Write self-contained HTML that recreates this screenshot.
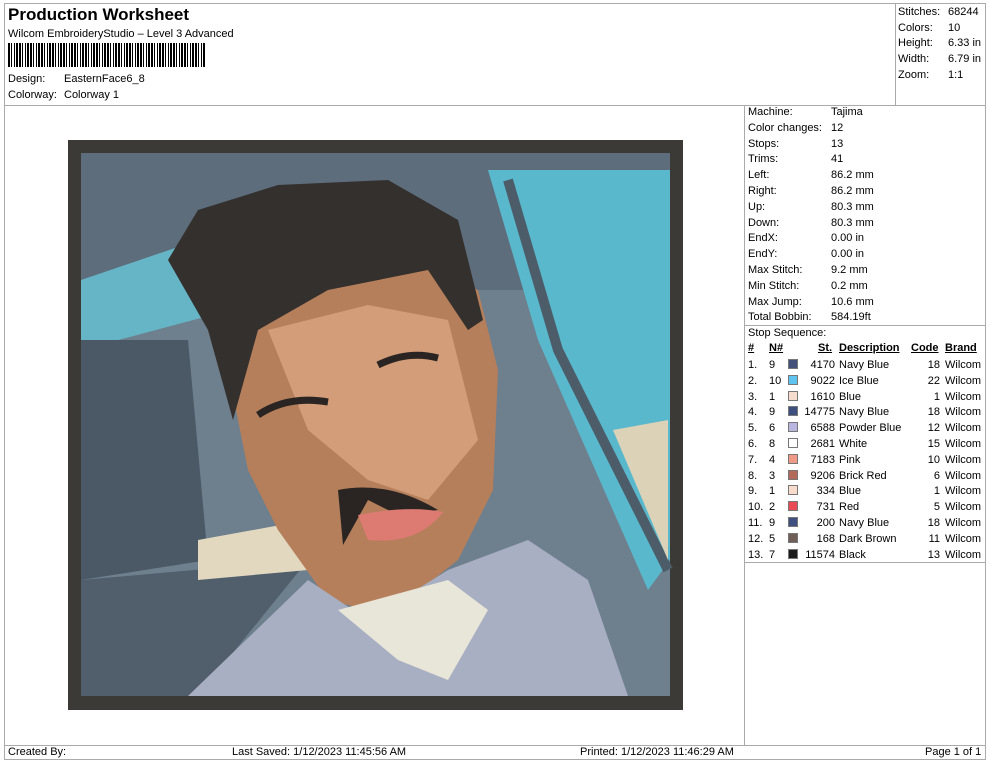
<!DOCTYPE html>
<html><head><style>
*{margin:0;padding:0;box-sizing:border-box}
body{width:990px;height:762px;background:#fff;font-family:"Liberation Sans",Arial,sans-serif;font-size:11px;color:#000;position:relative;overflow:hidden}
.a{position:absolute;white-space:nowrap}
.b{position:absolute;border:1px solid #aaa}
.sw{position:absolute;width:10px;height:10px;border:1px solid #777}
</style></head><body>
<div class="b" style="left:4px;top:3px;width:982px;height:757px"></div>
<div class="b" style="left:4px;top:3px;width:892px;height:103px"></div>
<div class="b" style="left:4px;top:105px;width:741px;height:641px"></div>
<div class="b" style="left:744px;top:105px;width:242px;height:458px"></div>
<div class="b" style="left:744px;top:325px;width:242px;height:1px;border-width:1px 0 0 0"></div>
<div class="b" style="left:4px;top:745px;width:982px;height:15px"></div>
<div class="a" style="left:8px;top:5px;font-size:17px;font-weight:bold">Production Worksheet</div>
<div class="a" style="left:8px;top:28px">Wilcom EmbroideryStudio – Level 3 Advanced</div>
<div class="a" style="left:8px;top:43px;width:198px;height:24px;background:repeating-linear-gradient(90deg,#000 0 2px,#fff 2px 3px,#000 3px 4px,#fff 4px 6px,#000 6px 7px,#fff 7px 8px,#000 8px 10px,#fff 10px 11px)"></div>
<div class="a" style="left:8px;top:73px">Design:</div><div class="a" style="left:64px;top:73px">EasternFace6_8</div>
<div class="a" style="left:8px;top:89px">Colorway:</div><div class="a" style="left:64px;top:89px">Colorway 1</div>
<div class="a" style="left:898px;top:5px;line-height:15.7px">Stitches:<br>Colors:<br>Height:<br>Width:<br>Zoom:</div>
<div class="a" style="left:948px;top:5px;line-height:15.7px">68244<br>10<br>6.33 in<br>6.79 in<br>1:1</div>
<div class="a" style="left:748px;top:105px;line-height:15.8px">Machine:<br>Color changes:<br>Stops:<br>Trims:<br>Left:<br>Right:<br>Up:<br>Down:<br>EndX:<br>EndY:<br>Max Stitch:<br>Min Stitch:<br>Max Jump:<br>Total Bobbin:<br>Stop Sequence:</div>
<div class="a" style="left:831px;top:105px;line-height:15.8px">Tajima<br>12<br>13<br>41<br>86.2 mm<br>86.2 mm<br>80.3 mm<br>80.3 mm<br>0.00 in<br>0.00 in<br>9.2 mm<br>0.2 mm<br>10.6 mm<br>584.19ft</div>
<div class="a" style="left:748px;top:342px;font-weight:bold;text-decoration:underline">#</div>
<div class="a" style="left:769px;top:342px;font-weight:bold;text-decoration:underline">N#</div>
<div class="a" style="left:818px;top:342px;font-weight:bold;text-decoration:underline">St.</div>
<div class="a" style="left:839px;top:342px;font-weight:bold;text-decoration:underline">Description</div>
<div class="a" style="left:911px;top:342px;font-weight:bold;text-decoration:underline">Code</div>
<div class="a" style="left:945px;top:342px;font-weight:bold;text-decoration:underline">Brand</div>
<div class="a" style="left:748px;top:358px;line-height:15.8px">1.<br>2.<br>3.<br>4.<br>5.<br>6.<br>7.<br>8.<br>9.<br>10.<br>11.<br>12.<br>13.</div>
<div class="a" style="left:769px;top:358px;line-height:15.8px">9<br>10<br>1<br>9<br>6<br>8<br>4<br>3<br>1<br>2<br>9<br>5<br>7</div>
<div class="a" style="left:798px;top:358px;width:37px;text-align:right;line-height:15.8px">4170<br>9022<br>1610<br>14775<br>6588<br>2681<br>7183<br>9206<br>334<br>731<br>200<br>168<br>11574</div>
<div class="a" style="left:839px;top:358px;line-height:15.8px">Navy Blue<br>Ice Blue<br>Blue<br>Navy Blue<br>Powder Blue<br>White<br>Pink<br>Brick Red<br>Blue<br>Red<br>Navy Blue<br>Dark Brown<br>Black</div>
<div class="a" style="left:900px;top:358px;width:40px;text-align:right;line-height:15.8px">18<br>22<br>1<br>18<br>12<br>15<br>10<br>6<br>1<br>5<br>18<br>11<br>13</div>
<div class="a" style="left:945px;top:358px;line-height:15.8px">Wilcom<br>Wilcom<br>Wilcom<br>Wilcom<br>Wilcom<br>Wilcom<br>Wilcom<br>Wilcom<br>Wilcom<br>Wilcom<br>Wilcom<br>Wilcom<br>Wilcom</div>
<div class="sw" style="left:788px;top:359px;background:#44527a"></div>
<div class="sw" style="left:788px;top:375px;background:#5ec3ef"></div>
<div class="sw" style="left:788px;top:391px;background:#f6dccc"></div>
<div class="sw" style="left:788px;top:406px;background:#3d4f7f"></div>
<div class="sw" style="left:788px;top:422px;background:#b9b6e0"></div>
<div class="sw" style="left:788px;top:438px;background:#fff"></div>
<div class="sw" style="left:788px;top:454px;background:#ef9a86"></div>
<div class="sw" style="left:788px;top:470px;background:#b46a5a"></div>
<div class="sw" style="left:788px;top:485px;background:#f7dccd"></div>
<div class="sw" style="left:788px;top:501px;background:#ea4a55"></div>
<div class="sw" style="left:788px;top:517px;background:#3f5080"></div>
<div class="sw" style="left:788px;top:533px;background:#6f5e58"></div>
<div class="sw" style="left:788px;top:549px;background:#1a1a1a"></div>
<svg class="a" style="left:68px;top:140px" width="615" height="570" viewBox="0 0 615 570">
<rect width="615" height="570" fill="#3b3a36"/>
<rect x="13" y="13" width="589" height="543" fill="#6e7f8d"/>
<path d="M13 13H602V70L560 30H460L440 60L470 150H13Z" fill="#5d6d7c"/>
<path d="M420 30L470 200L580 450L602 420V30Z" fill="#5ab8cc"/>
<path d="M13 140L160 90L200 160L13 210Z" fill="#66b5c7"/>
<path d="M440 40L490 210L600 430" stroke="#4d5c69" stroke-width="10" fill="none"/>
<path d="M13 200L120 200L140 420L13 440Z" fill="#4b5967"/>
<path d="M13 440L240 420L130 556H13Z" fill="#515f6c"/>
<path d="M130 400L240 380L240 430L130 440Z" fill="#e2d8c0"/>
<path d="M545 290L600 280L600 420Z" fill="#dcd2b8"/>
<path d="M150 180L180 330L210 390L260 460L320 475L390 420L425 350L430 230L410 150L350 120L230 130Z" fill="#b57f5c"/>
<path d="M200 190L300 165L380 180L410 300L360 360L300 340L240 290Z" fill="#d29d78"/>
<path d="M120 556L240 440L300 480L380 430L460 400L520 440L560 556Z" fill="#a9afc3"/>
<path d="M270 470L330 520L380 540L420 470L380 440Z" fill="#e8e6d8"/>
<path d="M100 120L130 70L210 45L320 40L390 80L415 180L400 190L360 130L260 150L190 190L165 280L140 190Z" fill="#33302d"/>
<path d="M270 350Q320 340 370 370L330 375L300 360L275 405Z" fill="#2a2522"/>
<path d="M290 375Q340 365 375 372Q350 405 300 400Z" fill="#dd7b72"/>
<path d="M190 275Q220 255 260 262" stroke="#2a2522" stroke-width="7" fill="none"/>
<path d="M310 225Q340 210 370 218" stroke="#2a2522" stroke-width="7" fill="none"/>
</svg>
<div class="a" style="left:8px;top:746px">Created By:</div>
<div class="a" style="left:232px;top:746px">Last Saved: 1/12/2023 11:45:56 AM</div>
<div class="a" style="left:580px;top:746px">Printed: 1/12/2023 11:46:29 AM</div>
<div class="a" style="left:925px;top:746px">Page 1 of 1</div>
</body></html>
